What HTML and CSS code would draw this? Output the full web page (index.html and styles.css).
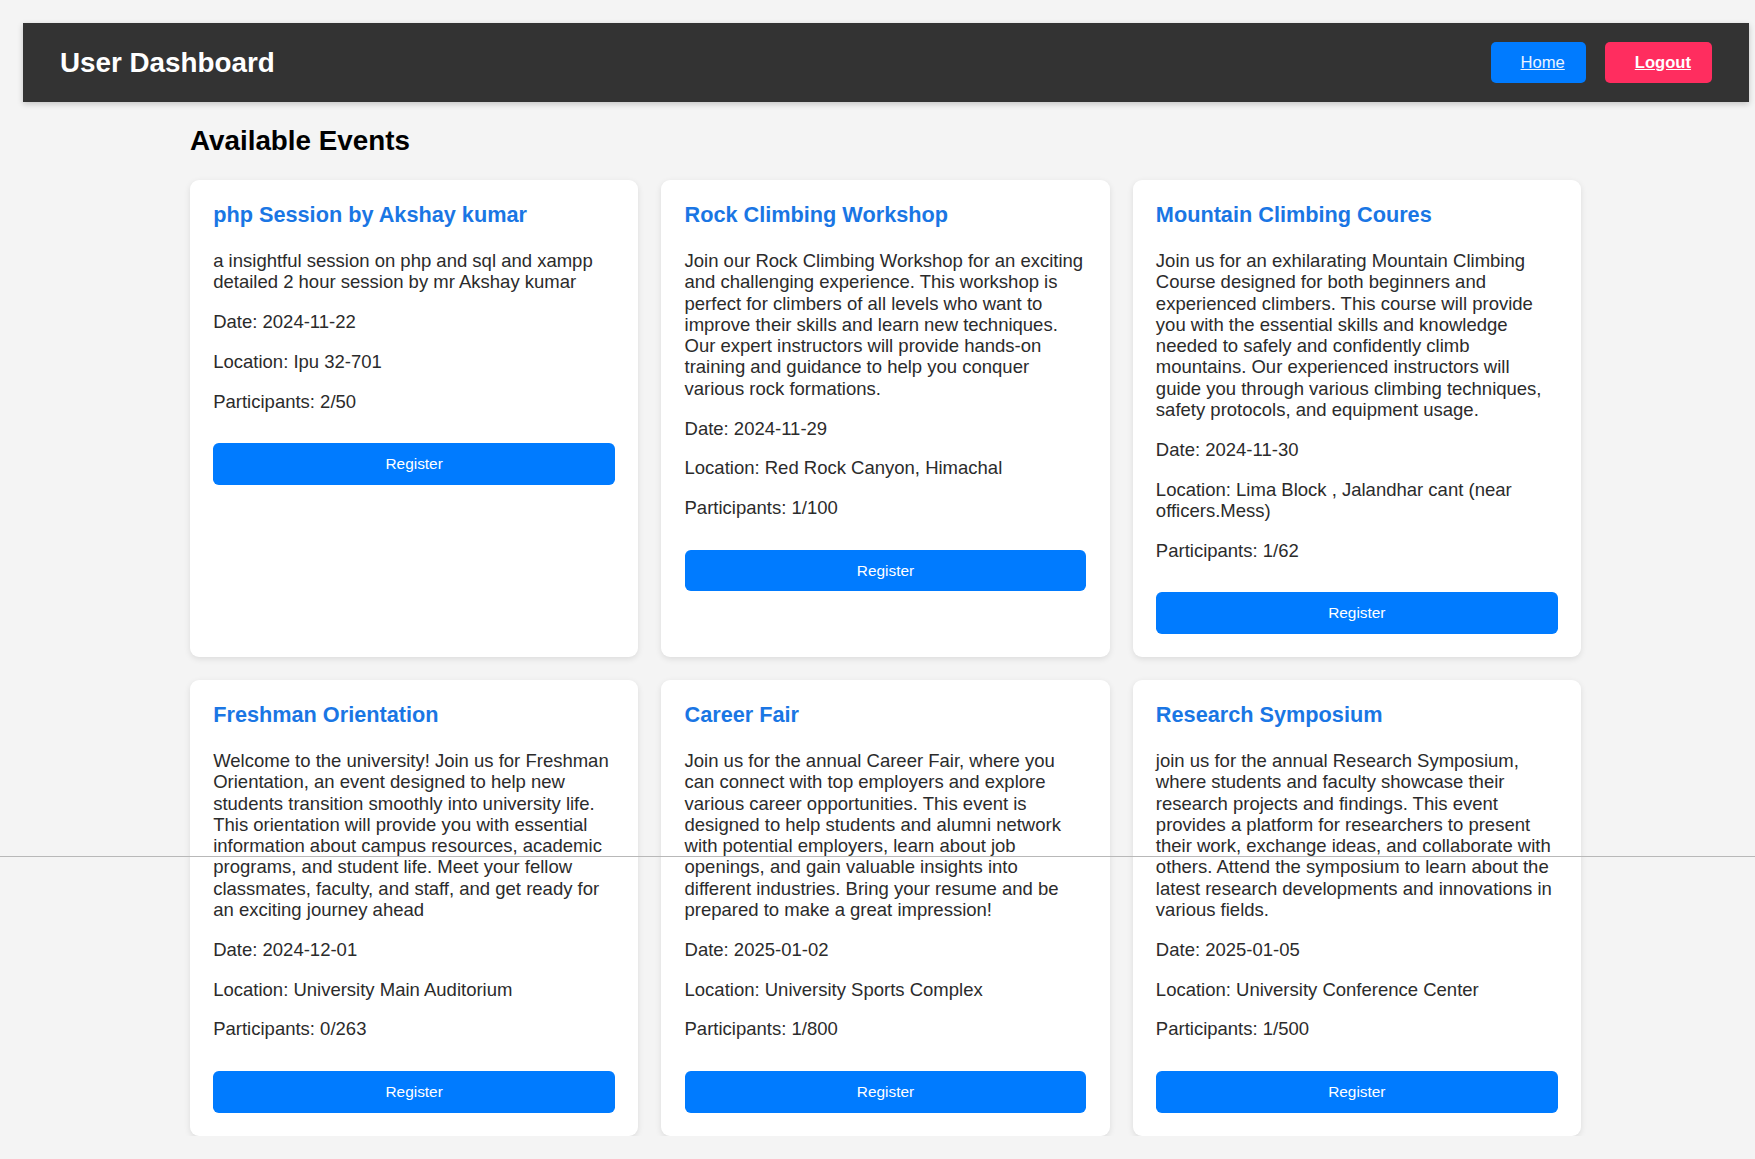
FILE: index.html
```html
<!DOCTYPE html>
<html lang="en">
<head>
<meta charset="utf-8">
<title>User Dashboard</title>
<link rel="stylesheet" href="styles.css">
</head>
<body>
<header class="topbar">
  <h1 class="brand">User Dashboard</h1>
  <nav class="nav">
    <a class="nav-btn home" href="#">Home</a>
    <a class="nav-btn logout" href="#">Logout</a>
  </nav>
</header>
<main class="content">
  <h2 class="section-title">Available Events</h2>
  <div class="event-grid">
    <div class="card">
      <h3 class="card-title">php Session by Akshay kumar</h3>
      <p>a insightful session on php and sql and xampp detailed 2 hour session by mr Akshay kumar</p>
      <p>Date: 2024-11-22</p>
      <p>Location: Ipu 32-701</p>
      <p>Participants: 2/50</p>
      <button class="register">Register</button>
    </div>
    <div class="card">
      <h3 class="card-title">Rock Climbing Workshop</h3>
      <p>Join our Rock Climbing Workshop for an exciting and challenging experience. This workshop is perfect for climbers of all levels who want to improve their skills and learn new techniques. Our expert instructors will provide hands-on training and guidance to help you conquer various rock formations.</p>
      <p>Date: 2024-11-29</p>
      <p>Location: Red Rock Canyon, Himachal</p>
      <p>Participants: 1/100</p>
      <button class="register">Register</button>
    </div>
    <div class="card">
      <h3 class="card-title">Mountain Climbing Coures</h3>
      <p>Join us for an exhilarating Mountain Climbing Course designed for both beginners and experienced climbers. This course will provide you with the essential skills and knowledge needed to safely and confidently climb mountains. Our experienced instructors will guide you through various climbing techniques, safety protocols, and equipment usage.</p>
      <p>Date: 2024-11-30</p>
      <p>Location: Lima Block , Jalandhar cant (near officers.Mess)</p>
      <p>Participants: 1/62</p>
      <button class="register">Register</button>
    </div>
    <div class="card">
      <h3 class="card-title">Freshman Orientation</h3>
      <p>Welcome to the university! Join us for Freshman Orientation, an event designed to help new students transition smoothly into university life. This orientation will provide you with essential information about campus resources, academic programs, and student life. Meet your fellow classmates, faculty, and staff, and get ready for an exciting journey ahead</p>
      <p>Date: 2024-12-01</p>
      <p>Location: University Main Auditorium</p>
      <p>Participants: 0/263</p>
      <button class="register">Register</button>
    </div>
    <div class="card">
      <h3 class="card-title">Career Fair</h3>
      <p>Join us for the annual Career Fair, where you can connect with top employers and explore various career opportunities. This event is designed to help students and alumni network with potential employers, learn about job openings, and gain valuable insights into different industries. Bring your resume and be prepared to make a great impression!</p>
      <p>Date: 2025-01-02</p>
      <p>Location: University Sports Complex</p>
      <p>Participants: 1/800</p>
      <button class="register">Register</button>
    </div>
    <div class="card">
      <h3 class="card-title">Research Symposium</h3>
      <p>join us for the annual Research Symposium, where students and faculty showcase their research projects and findings. This event provides a platform for researchers to present their work, exchange ideas, and collaborate with others. Attend the symposium to learn about the latest research developments and innovations in various fields.</p>
      <p>Date: 2025-01-05</p>
      <p>Location: University Conference Center</p>
      <p>Participants: 1/500</p>
      <button class="register">Register</button>
    </div>
  </div>
</main>
<div class="scan-line"></div>
</body>
</html>
```

FILE: styles.css
```css
html, body {
  margin: 0;
  padding: 0;
}

body {
  background: #f4f4f4;
  font-family: "Liberation Sans", Arial, Helvetica, sans-serif;
  font-size: 18.5px;
  line-height: 21.3px;
  color: #2b2b2b;
}

.topbar {
  margin: 23px 6px 0 23px;
  background: #333;
  color: #fff;
  padding: 19px 37px;
  display: flex;
  justify-content: space-between;
  align-items: center;
  box-shadow: 0 2px 6px rgba(0, 0, 0, 0.2);
}

.brand {
  margin: 0;
  font-size: 27.8px;
  line-height: 32px;
  font-weight: bold;
}

.nav {
  display: flex;
  gap: 19px;
}

.nav-btn {
  display: block;
  padding: 11px 21px 11px 30px;
  line-height: 19px;
  font-size: 16.6px;
  color: #fff;
  text-decoration: underline;
  border-radius: 5px;
}

.home {
  background: #007bff;
  color: #eaf3ff;
}

.logout {
  background: #ff2d5f;
  font-weight: bold;
}

.content {
  width: 1391px;
  margin-left: 190px;
}

.section-title {
  margin: 23.1px 0;
  font-size: 27.8px;
  line-height: 32px;
  font-weight: bold;
  color: #000;
}

.event-grid {
  display: grid;
  grid-template-columns: repeat(3, 1fr);
  gap: 23px;
}

.card {
  background: #fff;
  padding: 23.2px;
  border-radius: 9px;
  box-shadow: 0 2px 6px rgba(0, 0, 0, 0.1);
}

.card-title {
  margin: 0 0 21.7px;
  font-size: 21.7px;
  line-height: 24.9px;
  font-weight: bold;
  color: #1a76e4;
}

.card p {
  margin: 18.5px 0;
}

.register {
  display: block;
  width: 100%;
  margin: 31.3px 0 0;
  padding: 12px 0;
  border: none;
  border-radius: 5.8px;
  background: #007bff;
  color: #fff;
  font-family: "Liberation Sans", Arial, sans-serif;
  font-size: 15.4px;
  line-height: 17.7px;
}

.scan-line {
  position: fixed;
  left: 0;
  right: 0;
  top: 856px;
  height: 1px;
  background: #b8b8b8;
}
```
